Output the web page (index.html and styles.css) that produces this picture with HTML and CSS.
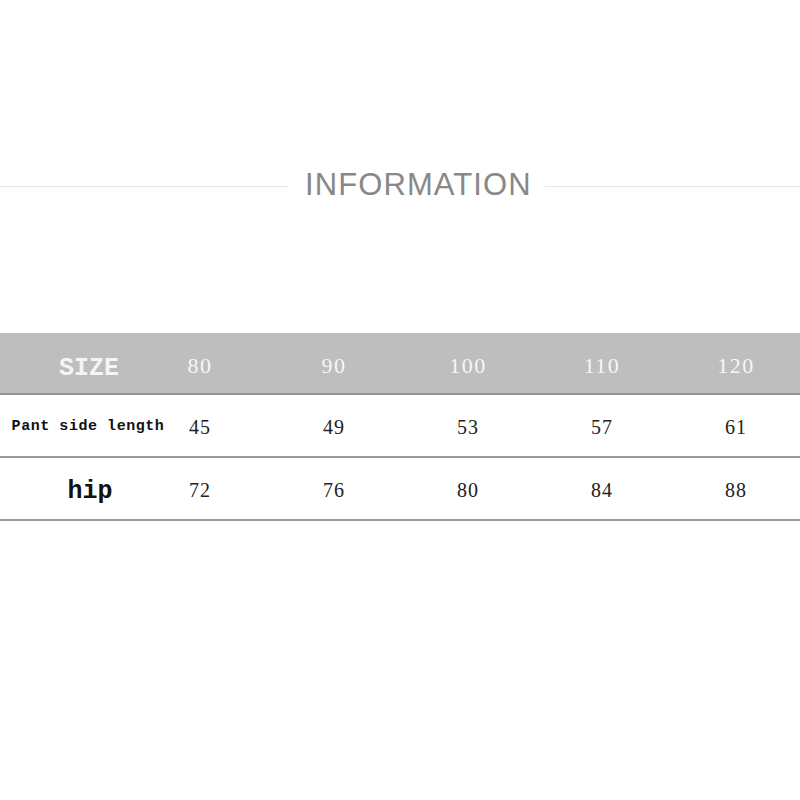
FILE: index.html
```html
<!DOCTYPE html>
<html>
<head>
<meta charset="utf-8">
<link rel="stylesheet" href="styles.css">
</head>
<body>
<div class="page">
  <div class="title-row">
    <div class="rule rule-left"></div>
    <h1 class="title">INFORMATION</h1>
    <div class="rule rule-right"></div>
  </div>
  <div class="table">
    <div class="row head">
      <div class="label size">SIZE</div>
      <div class="cell"><span>80</span></div>
      <div class="cell"><span>90</span></div>
      <div class="cell"><span>100</span></div>
      <div class="cell"><span>110</span></div>
      <div class="cell"><span>120</span></div>
    </div>
    <div class="row">
      <div class="label small">Pant side length</div>
      <div class="cell"><span>45</span></div>
      <div class="cell"><span>49</span></div>
      <div class="cell"><span>53</span></div>
      <div class="cell"><span>57</span></div>
      <div class="cell"><span>61</span></div>
    </div>
    <div class="row">
      <div class="label big">hip</div>
      <div class="cell"><span>72</span></div>
      <div class="cell"><span>76</span></div>
      <div class="cell"><span>80</span></div>
      <div class="cell"><span>84</span></div>
      <div class="cell"><span>88</span></div>
    </div>
  </div>
</div>
</body>
</html>
```
FILE: styles.css
```css
html, body {
  margin: 0;
  padding: 0;
  background: #ffffff;
}
.page {
  width: 800px;
  height: 800px;
  overflow: hidden;
  padding-top: 166px;
  box-sizing: border-box;
}
.title-row {
  display: flex;
  align-items: center;
  height: 38px;
}
.rule {
  height: 1px;
  background: #e6e6e6;
  margin-top: 2px;
}
.rule-left {
  width: 288px;
  flex: none;
}
.rule-right {
  flex: 1;
}
.title {
  margin: 0 13px 0 17px;
  font-family: "Liberation Sans", Arial, sans-serif;
  font-weight: normal;
  font-size: 31px;
  letter-spacing: 1.1px;
  color: #888888;
  line-height: 38px;
}
.table {
  margin-top: 129px;
}
.row {
  display: grid;
  grid-template-columns: 176px repeat(4, 134px) 1fr;
  height: 61px;
  border-bottom: 2px solid #9a9a9a;
  align-items: center;
}
.row.head {
  height: 60px;
  background: #bebebe;
  border-bottom-color: #959595;
}
.label {
  text-align: center;
  font-family: "Liberation Mono", "DejaVu Sans Mono", monospace;
  font-weight: bold;
  color: #111;
}
.label.size {
  color: #f5f5f5;
  font-size: 25px;
  padding-top: 10px;
  padding-left: 2px;
}
.label.small {
  font-size: 15px;
  letter-spacing: 0.55px;
  padding-top: 2px;
}
.label.big {
  font-size: 25px;
  padding-left: 4px;
  padding-top: 6px;
}
.cell span {
  display: block;
  width: 48px;
  text-align: center;
  font-family: "Liberation Serif", "Times New Roman", serif;
}
.head .cell span {
  color: #f7f7f7;
  font-size: 22px;
  letter-spacing: 1.5px;
  padding-top: 6px;
}
.row:not(.head) .cell span {
  color: #222;
  font-size: 20px;
  letter-spacing: 1px;
  padding-top: 4px;
}
```
